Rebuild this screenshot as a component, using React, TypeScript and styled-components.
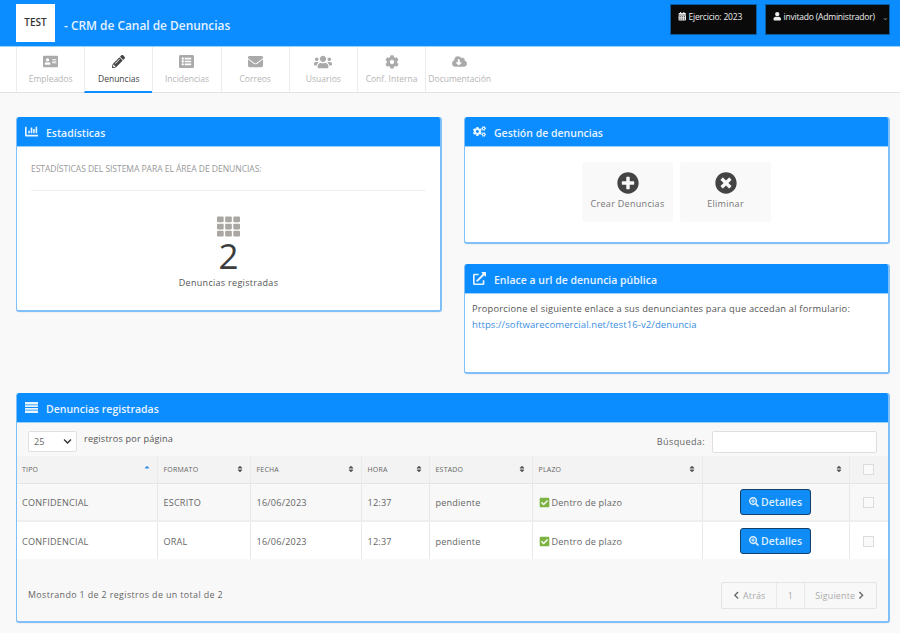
import React from "react";
import styled, { createGlobalStyle } from "styled-components";
import {
  FaAddressCard, FaPencilAlt, FaListAlt, FaEnvelope, FaUsers, FaCog, FaCloudDownloadAlt,
  FaCalendarAlt, FaUser, FaChartBar, FaCogs, FaTh, FaPlusCircle, FaTimesCircle,
  FaExternalLinkAlt, FaCheckSquare, FaSearchPlus, FaChevronLeft, FaChevronRight, FaSort, FaSortUp, FaChevronDown,
} from "react-icons/fa";

const Global = createGlobalStyle`
  html, body { margin: 0; padding: 0; background: #f9f9f9; }
  body { font-family: "Open Sans", "Liberation Sans", sans-serif; color: #555; width: 900px; height: 633px; overflow: hidden; }
  * { box-sizing: border-box; }
`;

const Blue = "#0b8cff";

const TopBar = styled.header`
  height: 47px; background: ${Blue}; border-bottom: 1px solid #9fd0fb;
  display: flex; align-items: flex-start; padding: 4px 10px 0 16px;
`;
const Logo = styled.div`
  width: 39px; height: 38px; background: #fff; color: #333; font-size: 10px; font-weight: 600;
  display: flex; justify-content: center; padding-top: 11px; line-height: 14px;
`;
const Brand = styled.div`
  margin: 13px 0 0 9px; color: #e4f2ff; font-size: 11.9px; font-weight: 600; line-height: 16px; flex: 1;
`;
const DarkBtn = styled.div<{ $w: number }>`
  width: ${p => p.$w}px; height: 31px; margin-left: 8px; background: #0a0a0a; border: 1px solid #0a5ea8;
  color: #eee; font-size: 8.5px; letter-spacing: -0.2px; display: flex; align-items: center; padding: 0 0 6px 7px; gap: 2px; white-space: nowrap;
  & > small { color: #888; font-size: 8px; margin-left: 5px; }
`;

const Nav = styled.nav`
  height: 46px; background: #fff; border-bottom: 1px solid #e2e2e2; padding-left: 16px; display: flex;
`;
const Tab = styled.div<{ $active?: boolean }>`
  width: 68.2px; height: 46px; border-left: 1px solid #ececec;
  border-bottom: 2px solid ${p => (p.$active ? Blue : "transparent")};
  color: ${p => (p.$active ? "#444" : "#b5b5b5")}; font-size: 8.5px; white-space: nowrap;
  display: flex; flex-direction: column; align-items: center; padding-top: 7px; gap: 4px; line-height: 12px;
`;
const TabIcon = styled.span<{ $active?: boolean; $size: number }>`
  height: 15px; display: flex; align-items: center; font-size: ${p => p.$size}px; color: ${p => (p.$active ? "#444" : "#aaa")};
`;

const Main = styled.main`
  padding: 24px 10px 0 16px; display: flex; flex-direction: column; gap: 19px;
`;
const TopGrid = styled.div`
  display: grid; grid-template-columns: 426px 426px; column-gap: 22px; align-items: start;
`;
const Column = styled.div`
  display: flex; flex-direction: column; gap: 20px;
`;
const Panel = styled.section<{ $h: number }>`
  height: ${p => p.$h}px; background: #fff; border-style: solid; border-color: #7fc0fb; border-width: 0 2px 2px 1px; border-radius: 3px;
  overflow: hidden; display: flex; flex-direction: column; box-shadow: 0 1px 1px rgba(0,0,0,.04);
`;
const PanelHead = styled.h2`
  margin: 0 -2px 0 -1px; height: 30px; flex: none; background: ${Blue}; border-bottom: 1px solid #9fd0fb; color: #e8f4ff;
  font-size: 10.5px; font-weight: 600; display: flex; align-items: center; padding: 2px 0 0 9px; gap: 8px; line-height: 14px;
  & > svg { font-size: 13px; color: #e8f4ff; margin-top: -2px; }
`;

const StatBody = styled.div`
  padding: 15px 14px 0; display: flex; flex-direction: column; align-items: center;
`;
const StatCaption = styled.p`
  margin: 0; width: 100%; font-size: 8.55px; color: #999; line-height: 12px; padding: 1px 0 15px; border-bottom: 1px solid #f0f0f0; letter-spacing: -0.05px;
`;
const StatIcon = styled.div`
  margin-top: 24px; font-size: 23px; line-height: 0; color: #aaa7a2; height: 23px;
`;
const StatNumber = styled.div`
  font-size: 35px; color: #3d3d3d; line-height: 36px;
`;
const StatLabel = styled.div`
  margin-top: 2px; font-size: 9px; color: #555; line-height: 14px; letter-spacing: .3px;
`;

const ActionRow = styled.div`
  display: flex; justify-content: center; gap: 7px; padding-top: 15px;
`;
const Action = styled.div`
  width: 91px; height: 60px; background: #f9f9f9; border-radius: 3px; color: #777; font-size: 9px; letter-spacing: .3px;
  display: flex; flex-direction: column; align-items: center; padding-top: 10px; gap: 3px; line-height: 14px;
  & > svg { font-size: 22px; color: #444; }
`;

const LinkBody = styled.div`
  padding: 7px 7px; font-size: 9.3px; line-height: 16px; color: #555; letter-spacing: .2px; white-space: nowrap;
`;
const Url = styled.a`
  color: #3d8fe0; text-decoration: none; display: block; font-size: 9.6px; letter-spacing: .06px;
`;

const TablePanel = styled(Panel)`
  background: #f8f8f8;
`;
const Controls = styled.div`
  height: 33px; padding: 8px 11px 0 11px; display: flex; justify-content: space-between; align-items: flex-start; font-size: 9.1px; letter-spacing: .2px;
`;
const LengthGroup = styled.div`
  display: flex; gap: 7px; line-height: 15px;
`;
const SelectBox = styled.div`
  width: 49px; height: 21px; background: #fff; border: 1px solid #e0e0e0; border-radius: 2px; color: #666; font-size: 9px;
  display: flex; align-items: center; justify-content: space-between; padding: 0 4px 0 5px;
  & > svg { font-size: 9px; color: #333; }
`;
const SearchGroup = styled.label`
  display: flex; gap: 7px; color: #666; line-height: 21px; letter-spacing: .35px;
`;
const SearchInput = styled.div`
  width: 165px; height: 22px; background: #fff; border: 1px solid #dfdfdf; border-radius: 2px;
`;
const ListGlyph = styled.svg`
  width: 13px; height: 13px; flex: none; margin-top: -2px;
`;

const Grid = styled.table`
  width: 871px; border-collapse: collapse; table-layout: fixed; font-size: 9.1px; color: #666; letter-spacing: .2px;
`;
const HeadRow = styled.tr`
  height: 27px; background: #f3f3f3; border-bottom: 1px solid #e4e4e4;
`;
const Th = styled.th`
  font-size: 7px; font-weight: 400; color: #666; text-align: left; padding: 0 6px; border-left: 1px solid #eaeaea; position: relative;
  &:first-child { border-left: 0; padding-left: 5px; }
`;
const SortMark = styled.span<{ $on?: boolean }>`
  position: absolute; right: 6px; top: 9px; font-size: 8px; line-height: 8px; color: ${p => (p.$on ? "#3d93e8" : "#555")};
`;
const Row = styled.tr<{ $odd?: boolean }>`
  background: ${p => (p.$odd ? "#f8f8f8" : "#fff")}; border-bottom: 2px solid #eee; height: 38px;
  &:last-child { border-bottom: 0; }
`;
const Td = styled.td<{ $center?: boolean }>`
  padding: ${p => (p.$center ? "0" : "2px")} 6px 0; border-left: 1px solid #e8e8e8; white-space: nowrap; text-align: ${p => (p.$center ? "center" : "left")};
  &:first-child { border-left: 0; padding-left: 5px; }
`;
const OkIcon = styled(FaCheckSquare)`
  color: #7cb342; font-size: 11px; vertical-align: -2px; margin-right: 2px;
`;
const DetailBtn = styled.button`
  width: 71px; height: 26px; background: #0f8cf5; color: #dcefff; border: 1px solid #163f66; border-radius: 3px;
  font-family: "Open Sans", sans-serif; font-size: 10.5px; font-weight: 600; padding: 0; display: inline-flex; align-items: center; justify-content: center; gap: 2px;
  vertical-align: middle;
  & > svg { font-size: 10px; }
`;
const Check = styled.span`
  display: inline-block; width: 11px; height: 11px; border: 1px solid #dcdcdc; background: #fafafa; vertical-align: middle;
`;
const HeadCheck = styled(Th)`
  text-align: center;
`;

const Footer = styled.div`
  flex: 1; display: flex; justify-content: space-between; align-items: flex-start; padding: 23px 11px 0 11px; font-size: 8.9px; color: #666; letter-spacing: .2px;
`;
const Summary = styled.div`
  line-height: 26px; letter-spacing: .38px;
`;
const Pager = styled.div`
  display: flex; height: 27px; border: 1px solid #e4e4e4; border-radius: 2px; color: #aaa; background: #f8f8f8;
`;
const PageCell = styled.div<{ $w: number }>`
  width: ${p => p.$w}px; display: flex; align-items: center; justify-content: center; gap: 2px; border-left: 1px solid #e8e8e8;
  &:first-child { border-left: 0; }
  & > svg { font-size: 8.5px; color: #666; }
`;

const tabs = [
  { icon: <FaAddressCard />, label: "Empleados", size: 15 },
  { icon: <FaPencilAlt />, label: "Denuncias", active: true, size: 13 },
  { icon: <FaListAlt />, label: "Incidencias", size: 15 },
  { icon: <FaEnvelope />, label: "Correos", size: 15 },
  { icon: <FaUsers />, label: "Usuarios", size: 18 },
  { icon: <FaCog />, label: "Conf. Interna", size: 14 },
  { icon: <FaCloudDownloadAlt />, label: "Documentación", size: 15 },
];
const columns = [
  { label: "TIPO", w: 140, on: true },
  { label: "FORMATO", w: 93 },
  { label: "FECHA", w: 111 },
  { label: "HORA", w: 68 },
  { label: "ESTADO", w: 103 },
  { label: "PLAZO", w: 170 },
  { label: "", w: 147 },
];
const rows = [
  { format: "ESCRITO", odd: true },
  { format: "ORAL", odd: false },
];

export default function App() {
  return (
    <>
      <Global />
      <TopBar>
        <Logo>TEST</Logo>
        <Brand>- CRM de Canal de Denuncias</Brand>
        <DarkBtn $w={87}><FaCalendarAlt />Ejercicio: 2023</DarkBtn>
        <DarkBtn $w={125}><FaUser />invitado (Administrador)<small>⌄</small></DarkBtn>
      </TopBar>
      <Nav>
        {tabs.map(t => (
          <Tab key={t.label} $active={t.active}>
            <TabIcon $active={t.active} $size={t.size}>{t.icon}</TabIcon>
            <span>{t.label}</span>
          </Tab>
        ))}
      </Nav>
      <Main>
        <TopGrid>
          <Panel $h={195}>
            <PanelHead><FaChartBar />Estadísticas</PanelHead>
            <StatBody>
              <StatCaption>ESTADÍSTICAS DEL SISTEMA PARA EL ÁREA DE DENUNCIAS:</StatCaption>
              <StatIcon><FaTh /></StatIcon>
              <StatNumber>2</StatNumber>
              <StatLabel>Denuncias registradas</StatLabel>
            </StatBody>
          </Panel>
          <Column>
            <Panel $h={127}>
              <PanelHead><FaCogs />Gestión de denuncias</PanelHead>
              <ActionRow>
                <Action><FaPlusCircle />Crear Denuncias</Action>
                <Action><FaTimesCircle />Eliminar</Action>
              </ActionRow>
            </Panel>
            <Panel $h={110}>
              <PanelHead><FaExternalLinkAlt />Enlace a url de denuncia pública</PanelHead>
              <LinkBody>
                Proporcione el siguiente enlace a sus denunciantes para que accedan al formulario:
                <Url href="#">https://softwarecomercial.net/test16-v2/denuncia</Url>
              </LinkBody>
            </Panel>
          </Column>
        </TopGrid>
        <TablePanel $h={230}>
          <PanelHead>
            <ListGlyph viewBox="0 0 13 13">
              <path fill="#e8f4ff" d="M0 1h13v2.4H0zM0 4.2h13v1.9H0zM0 6.9h13v1.9H0zM0 9.6h13V12H0z" />
            </ListGlyph>
            Denuncias registradas
          </PanelHead>
          <Controls>
            <LengthGroup>
              <SelectBox>25<FaChevronDown /></SelectBox>
              registros por página
            </LengthGroup>
            <SearchGroup>Búsqueda:<SearchInput /></SearchGroup>
          </Controls>
          <Grid>
            <colgroup>
              {columns.map(c => <col key={c.label} style={{ width: c.w }} />)}
              <col />
            </colgroup>
            <thead>
              <HeadRow>
                {columns.map(c => (
                  <Th key={c.label}>
                    {c.label}
                    <SortMark $on={c.on}>{c.on ? <FaSortUp /> : <FaSort />}</SortMark>
                  </Th>
                ))}
                <HeadCheck><Check /></HeadCheck>
              </HeadRow>
            </thead>
            <tbody>
              {rows.map(r => (
                <Row key={r.format} $odd={r.odd}>
                  <Td>CONFIDENCIAL</Td>
                  <Td>{r.format}</Td>
                  <Td>16/06/2023</Td>
                  <Td>12:37</Td>
                  <Td>pendiente</Td>
                  <Td><OkIcon />Dentro de plazo</Td>
                  <Td $center><DetailBtn><FaSearchPlus />Detalles</DetailBtn></Td>
                  <Td $center><Check /></Td>
                </Row>
              ))}
            </tbody>
          </Grid>
          <Footer>
            <Summary>Mostrando 1 de 2 registros de un total de 2</Summary>
            <Pager>
              <PageCell $w={54}><FaChevronLeft />Atrás</PageCell>
              <PageCell $w={28}>1</PageCell>
              <PageCell $w={72}>Siguiente<FaChevronRight /></PageCell>
            </Pager>
          </Footer>
        </TablePanel>
      </Main>
    </>
  );
}
